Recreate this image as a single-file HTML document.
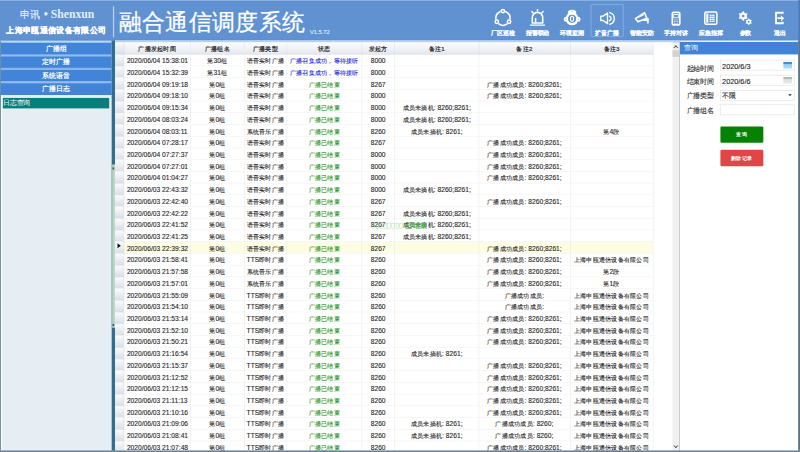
<!DOCTYPE html>
<html><head><meta charset="utf-8">
<style>
html,body{margin:0;padding:0;width:800px;height:452px;overflow:hidden;background:#fff}
#root{position:absolute;left:0;top:0;width:1920px;height:1080px;transform:scale(0.4166667,0.4185185);transform-origin:0 0;font-family:"Liberation Sans",sans-serif;overflow:hidden;background:#fff}
.abs{position:absolute}
#hdr{left:0;top:0;width:1920px;height:97px;background:#6092d2;border-top:2px solid #8fb6e6;border-bottom:2px solid #5686c8;box-sizing:border-box}
#brand1{left:48px;top:18px;font-family:"Liberation Serif",serif;font-weight:bold;font-size:28px;color:#e4edf8;white-space:nowrap;letter-spacing:0px}
#brand2{left:15px;top:58px;font-weight:bold;font-size:20px;color:#fff;white-space:nowrap;line-height:28px;-webkit-text-stroke:0.6px #fff}
#vline{left:271px;top:15px;width:3px;height:74px;background:#b9d2f0}
#title{left:285px;top:15px;font-size:56px;color:#fff;white-space:nowrap;line-height:76px;font-weight:normal;-webkit-text-stroke:0.6px #fff}
#ver{left:744px;top:69.5px;font-size:13.6px;line-height:16px;color:#d8e6f6;white-space:nowrap;-webkit-text-stroke:0.4px #d8e6f6}
.tb{position:absolute;top:11px;width:78px;height:76px;box-sizing:border-box;text-align:center;color:#fff}
.tb svg{position:absolute;left:15px;top:10px;width:48px;height:48px}
.tb .lb{position:absolute;left:-10px;right:-10px;top:56.5px;font-size:14px;font-weight:bold;line-height:20px;white-space:nowrap;-webkit-text-stroke:0.15px #fff}
.tb.on{border:1.6px solid #b0cbee}
#side{left:0;top:97px;width:268px;height:983px;background:#e7eef3;border-left:2px solid #5f7f8f;box-sizing:border-box;box-shadow:inset 3px 0 0 #f6fbfe}
.sbtn{position:absolute;left:0;width:266px;height:26.5px;border-bottom:1.5px solid #4c7dc2;background:#4284d8;color:#fff;font-weight:bold;font-size:17px;line-height:28px;text-align:center;border-top:4.3px solid #90bff2}
#teal{left:7px;top:233.7px;width:255px;height:25.5px;background:#047f7b;color:#fff;font-size:16px;line-height:25px;padding-left:1px;box-sizing:border-box}
#split{left:268px;top:97px;width:8px;height:983px;background:#2f6e8f}
#grid{left:276px;top:97px;width:1338px;height:983px;background:#fff;overflow:hidden;border-top:4px solid #b6d2ee;box-sizing:border-box}
table{border-collapse:collapse;table-layout:fixed;width:1354px;font-size:14.6px;color:#1e1e1e;-webkit-text-stroke:0.25px currentColor}
.a{font-size:16px}
td,th{padding:5px 0 0 0;height:28px;text-align:center;white-space:nowrap;overflow:hidden;border-right:1px solid #e3e3e3;border-bottom:1px solid #ececec;box-sizing:border-box}
th{height:28.7px;padding-top:2px;font-weight:normal;font-size:14.6px;-webkit-text-stroke:0.45px #222;background:linear-gradient(#fdfdfd,#e4e8ee);border-right:1px solid #d0d4da;border-bottom:1px solid #c8ccd2;color:#222}
td.rh,th.rh{background:linear-gradient(#fafbfc,#d9dfe7);border-right:1px solid #c7ccd4;border-bottom:1px solid #d6dbe2}
td.c1{text-align:left;padding-left:7px}
td.b{color:#2222e2}
td.g{color:#259525}
td.ce{border-right:none;border-bottom:none}
tr.sel td{background:#fdfde3}
tr.sel td.rh{background:linear-gradient(#fafbfc,#d9dfe7)}
tr.sel td.ce{background:#fff}
.ptr{display:inline-block;width:0;height:0;border-left:8px solid #111;border-top:6.5px solid transparent;border-bottom:6.5px solid transparent;vertical-align:middle;position:relative;top:-8px;left:0px}
#vscroll{left:1614px;top:97px;width:16px;height:983px;background:#f0f0f0;border-top:5px solid #b6d2ee;box-sizing:border-box}
#thumb{left:1614px;top:120px;width:16px;height:16px;background:#d2d2d2}
.sarr{position:absolute;left:1618px;width:8px;height:8px;box-sizing:border-box;border-left:2.5px solid #444;border-top:2.5px solid #444}
#panel{left:1630px;top:97px;width:290px;height:983px;background:#fff;border-left:2px solid #bfc4c8;border-right:4px solid #6c7f8a;box-sizing:border-box}
#phead{left:0;top:3.4px;width:100%;height:29.3px;background:#4283d8;color:#fff;font-size:17px;line-height:30px;padding-left:10px;box-sizing:border-box}
.lab{position:absolute;left:1648px;font-size:15.6px;line-height:20px;color:#333;white-space:nowrap;-webkit-text-stroke:0.3px #333}
.inp{position:absolute;left:1729px;width:178px;height:25px;border:1px solid #d2d2d2;box-sizing:border-box;background:#fff;font-size:17.5px;line-height:31px;padding-left:3px;color:#222;-webkit-text-stroke:0.25px #222}
.cal{position:absolute;left:150px;top:4px;width:21px;height:16px;background:linear-gradient(#3d8fd8 0,#3d8fd8 25%,#8cc8f0 25%,#b8e0f8 100%)}
.cal.g{background:linear-gradient(#b8b8b8 0,#b8b8b8 25%,#d8d8d8 25%,#ececec 100%)}
.dd{position:absolute;left:162px;top:8px;width:0;height:0;border-top:5.5px solid #222;border-left:4px solid transparent;border-right:4px solid transparent}
.btn{position:absolute;left:1729px;width:103px;height:39px;border-radius:3px;color:#fff;font-size:13px;font-weight:bold;text-align:center;line-height:39px}
#bottom{left:0;top:1076px;width:1920px;height:4px;background:linear-gradient(#8aa3b8,#54728b)}
#rb1{left:1916px;top:0;width:4px;height:97px;background:#4d7cb8}
#rb2{left:1916px;top:97px;width:4px;height:983px;background:#5d7686}
#splitl{left:268px;top:393px;width:8px;height:390px;background:linear-gradient(90deg,#9fbfae,#b8d4c4 60%,#c8dcd2)}
.mk{position:absolute;left:270px;width:4px;height:5px;background:#3d5a50}
</style></head><body><div id="root">
<div id="hdr" class="abs"></div>
<div id="brand1" class="abs"><span style="font-weight:normal;font-size:25px;-webkit-text-stroke:0.4px #e4edf8;margin-right:7px">申讯</span>• Shenxun</div>
<div id="brand2" class="abs">上海申瓯通信设备有限公司</div>
<div id="vline" class="abs"></div>
<div id="title" class="abs">融合通信调度系统</div>
<div id="ver" class="abs">V1.5.72</div>
<div class="tb" style="left:1168px"><svg viewBox="0 0 48 48" fill="none" stroke="#fff" stroke-width="3"><path d="M30.9 7.0 A17.0 17.0 0 0 1 40.9 24.3 M34.0 36.3 A17.0 17.0 0 0 1 14.0 36.3 M7.1 24.3 A17.0 17.0 0 0 1 17.1 7.0 " stroke-width="3.8" stroke-linecap="round"/><circle cx="24.0" cy="5.5" r="4" stroke-width="3.6"/><circle cx="38.7" cy="31.0" r="4" stroke-width="3.6"/><circle cx="9.3" cy="31.0" r="4" stroke-width="3.6"/></svg><div class="lb">厂区巡检</div></div>
<div class="tb" style="left:1251px"><svg viewBox="0 0 48 48" fill="none" stroke="#fff" stroke-width="3"><path d="M11.5 34 V21 A12.5 12.5 0 0 1 36.5 21 V34 Z" stroke-width="3.8" stroke-linejoin="round"/><path d="M6 39 H42" stroke-width="3.4"/><path d="M19.5 22 V33" stroke-width="3.4"/><path d="M24 1.5 V5.5 M10.5 6.5 L13 9.5 M37.5 6.5 L35 9.5" stroke-width="3.4" stroke-linecap="round"/></svg><div class="lb">报警联动</div></div>
<div class="tb" style="left:1334px"><svg viewBox="0 0 48 48" fill="none" stroke="#fff" stroke-width="3"><g fill="#fff" stroke="none"><circle cx="24" cy="24" r="15.5"/><ellipse cx="24" cy="8.5" rx="10" ry="6.5"/><circle cx="10" cy="25" r="6"/><circle cx="38" cy="25" r="6"/></g><g fill="#6092d2" stroke="none" opacity="0.55"><circle cx="24" cy="6" r="1.8"/><circle cx="8.5" cy="25" r="1.5"/><circle cx="39.5" cy="25" r="1.5"/></g><circle cx="24" cy="24" r="9.8" fill="#6092d2" stroke="none"/><ellipse cx="24" cy="24" rx="3.8" ry="6" stroke-width="2.6"/></svg><div class="lb">环境监测</div></div>
<div class="tb on" style="left:1418px"><svg viewBox="0 0 48 48" fill="none" stroke="#fff" stroke-width="3"><path d="M8 16.5 H13.5 L24 9 V34.5 L13.5 27 H8 Z" stroke-width="3.3" stroke-linejoin="round"/><path d="M29 16.5 A6 6 0 0 1 29 27.5" stroke-width="3.3" stroke-linecap="round"/><path d="M29.5 8 A14.5 14.5 0 0 1 29.5 36" stroke-width="3.3" stroke-linecap="round"/></svg><div class="lb">扩音广播</div></div>
<div class="tb" style="left:1501px"><svg viewBox="0 0 48 48" fill="none" stroke="#fff" stroke-width="3"><path d="M9 23.5 L31 9.5 L36.5 22.5 L15 31 Z" stroke-width="3.8" stroke-linejoin="round"/><path d="M16 21 L30 14" stroke-width="2"/><path d="M28 27 H39 M39 22 V35" stroke-width="3.8"/><circle cx="33" cy="27" r="2" fill="#fff" stroke="none"/></svg><div class="lb">智能安防</div></div>
<div class="tb" style="left:1583px"><svg viewBox="0 0 48 48" fill="none" stroke="#fff" stroke-width="3"><rect x="15.5" y="8.5" width="18" height="30" rx="3" stroke-width="3.8"/><rect x="19" y="13.5" width="11" height="8" stroke-width="2"/><g fill="#fff" stroke="none" opacity="0.75"><rect x="19.3" y="25.5" width="2.6" height="2.4"/><rect x="23.2" y="25.5" width="2.6" height="2.4"/><rect x="27.1" y="25.5" width="2.6" height="2.4"/><rect x="19.3" y="29.5" width="2.6" height="2.4"/><rect x="23.2" y="29.5" width="2.6" height="2.4"/><rect x="27.1" y="29.5" width="2.6" height="2.4"/><rect x="19.3" y="33.5" width="2.6" height="2.4"/><rect x="23.2" y="33.5" width="2.6" height="2.4"/><rect x="27.1" y="33.5" width="2.6" height="2.4"/></g></svg><div class="lb">手持对讲</div></div>
<div class="tb" style="left:1667px"><svg viewBox="0 0 48 48" fill="none" stroke="#fff" stroke-width="3"><rect x="9.5" y="7.5" width="29" height="29.5" rx="3.5" stroke-width="3.6"/><path d="M13 11 H18 V33.5 H13 Z" fill="#fff" stroke="none"/><g fill="#fff" stroke="none"><rect x="21.2" y="13.8" width="3.4" height="3.6"/><rect x="25.4" y="13.8" width="3.4" height="3.6"/><rect x="29.6" y="13.8" width="3.4" height="3.6"/><rect x="21.2" y="18.5" width="3.4" height="3.6"/><rect x="25.4" y="18.5" width="3.4" height="3.6"/><rect x="29.6" y="18.5" width="3.4" height="3.6"/><rect x="21.2" y="23.2" width="3.4" height="3.6"/><rect x="25.4" y="23.2" width="3.4" height="3.6"/><rect x="29.6" y="23.2" width="3.4" height="3.6"/><rect x="21.2" y="27.9" width="3.4" height="3.6"/><rect x="25.4" y="27.9" width="3.4" height="3.6"/><rect x="29.6" y="27.9" width="3.4" height="3.6"/></g></svg><div class="lb">应急指挥</div></div>
<div class="tb" style="left:1750px"><svg viewBox="0 0 48 48" fill="none" stroke="#fff" stroke-width="3"><path d="M14.8 9.3 L16.9 8.6 L17.0 5.8 L20.4 5.8 L20.5 8.6 L22.6 9.3 L23.6 9.9 L25.2 11.3 L27.7 10.1 L29.4 13.0 L27.1 14.5 L27.5 16.6 L27.5 17.8 L27.1 19.9 L29.4 21.4 L27.7 24.3 L25.2 23.1 L23.6 24.5 L22.6 25.1 L20.5 25.8 L20.4 28.6 L17.0 28.6 L16.9 25.8 L14.8 25.1 L13.8 24.5 L12.2 23.1 L9.7 24.3 L8.0 21.4 L10.3 19.9 L9.9 17.8 L9.9 16.6 L10.3 14.5 L8.0 13.0 L9.7 10.1 L12.2 11.3 L13.8 9.9 Z" fill="#fff" stroke="none"/><circle cx="18.7" cy="17.2" r="3.2" fill="#6092d2" stroke="none"/><path d="M29.4 25.6 L30.8 25.1 L30.8 23.1 L33.2 23.1 L33.2 25.1 L34.6 25.6 L35.4 26.0 L36.5 27.0 L38.3 26.0 L39.4 28.1 L37.7 29.1 L38.0 30.6 L38.0 31.4 L37.7 32.9 L39.4 33.9 L38.3 36.0 L36.5 35.0 L35.4 36.0 L34.6 36.4 L33.2 36.9 L33.2 38.9 L30.8 38.9 L30.8 36.9 L29.4 36.4 L28.6 36.0 L27.5 35.0 L25.7 36.0 L24.6 33.9 L26.3 32.9 L26.0 31.4 L26.0 30.6 L26.3 29.1 L24.6 28.1 L25.7 26.0 L27.5 27.0 L28.6 26.0 Z" fill="#fff" stroke="none"/><circle cx="32" cy="31" r="2.2" fill="#6092d2" stroke="none"/></svg><div class="lb">参数</div></div>
<div class="tb" style="left:1832px"><svg viewBox="0 0 48 48" fill="none" stroke="#fff" stroke-width="3"><path d="M31.5 12 V9.5 H15.5 V34.5 H31.5 V31" stroke-width="4.5" stroke-linejoin="miter"/><path d="M19 22.5 H29" stroke-width="4"/><path d="M27.5 15.5 L35 22.5 L27.5 29.5 Z" fill="#fff" stroke="none"/></svg><div class="lb">退出</div></div>
<div id="side" class="abs">
<div class="abs" style="left:0;top:0;width:266px;height:1.4px;background:#5a8acb"></div><div class="sbtn" style="top:1.4px;border-top-color:#b2dcf8">广播组</div>
<div class="sbtn" style="top:33.67px">定时广播</div>
<div class="sbtn" style="top:65.94px">系统语音</div>
<div class="sbtn" style="top:98.2px">广播日志</div>
</div>
<div id="teal" class="abs">日志查询</div>
<div id="split" class="abs"></div>
<div id="grid" class="abs">
<table>
<colgroup><col style="width:21px"><col style="width:160px"><col style="width:129px"><col style="width:102px"><col style="width:180px"><col style="width:79px"><col style="width:202px"><col style="width:219px"><col style="width:199px"><col style="width:63px"></colgroup>
<tr><th class="rh"></th><th>广播发起时间</th><th>广播组名</th><th>广播类型</th><th>状态</th><th>发起方</th><th>备注1</th><th>备注2</th><th>备注3</th><th style="border-right:none;background:#fff;border-bottom:none"></th></tr>
<tr><td class="rh"></td><td class="c1 a">2020/06/04 15:38:01</td><td>第<span class="a">30</span>组</td><td>语音实时广播</td><td class="b">广播召集成功，等待接听</td><td class="a">8000</td><td></td><td></td><td></td><td class="ce"></td></tr>
<tr><td class="rh"></td><td class="c1 a">2020/06/04 15:32:39</td><td>第<span class="a">31</span>组</td><td>语音实时广播</td><td class="b">广播召集成功，等待接听</td><td class="a">8000</td><td></td><td></td><td></td><td class="ce"></td></tr>
<tr><td class="rh"></td><td class="c1 a">2020/06/04 09:19:18</td><td>第<span class="a">0</span>组</td><td>语音实时广播</td><td class="g">广播已结束</td><td class="a">8267</td><td></td><td>广播成功成员<span class="a">: 8260;8261;</span></td><td></td><td class="ce"></td></tr>
<tr><td class="rh"></td><td class="c1 a">2020/06/04 09:18:10</td><td>第<span class="a">0</span>组</td><td>语音实时广播</td><td class="g">广播已结束</td><td class="a">8000</td><td></td><td>广播成功成员<span class="a">: 8260;8261;</span></td><td></td><td class="ce"></td></tr>
<tr><td class="rh"></td><td class="c1 a">2020/06/04 09:15:34</td><td>第<span class="a">0</span>组</td><td>语音实时广播</td><td class="g">广播已结束</td><td class="a">8000</td><td>成员未摘机<span class="a">: 8260;8261;</span></td><td></td><td></td><td class="ce"></td></tr>
<tr><td class="rh"></td><td class="c1 a">2020/06/04 08:03:24</td><td>第<span class="a">0</span>组</td><td>语音实时广播</td><td class="g">广播已结束</td><td class="a">8000</td><td>成员未摘机<span class="a">: 8260;8261;</span></td><td></td><td></td><td class="ce"></td></tr>
<tr><td class="rh"></td><td class="c1 a">2020/06/04 08:03:11</td><td>第<span class="a">0</span>组</td><td>系统音乐广播</td><td class="g">广播已结束</td><td class="a">8260</td><td>成员未摘机<span class="a">: 8261;</span></td><td></td><td>第<span class="a">4</span>段</td><td class="ce"></td></tr>
<tr><td class="rh"></td><td class="c1 a">2020/06/04 07:28:17</td><td>第<span class="a">0</span>组</td><td>语音实时广播</td><td class="g">广播已结束</td><td class="a">8267</td><td></td><td>广播成功成员<span class="a">: 8260;8261;</span></td><td></td><td class="ce"></td></tr>
<tr><td class="rh"></td><td class="c1 a">2020/06/04 07:27:37</td><td>第<span class="a">0</span>组</td><td>语音实时广播</td><td class="g">广播已结束</td><td class="a">8000</td><td></td><td>广播成功成员<span class="a">: 8260;8261;</span></td><td></td><td class="ce"></td></tr>
<tr><td class="rh"></td><td class="c1 a">2020/06/04 07:27:01</td><td>第<span class="a">0</span>组</td><td>语音实时广播</td><td class="g">广播已结束</td><td class="a">8000</td><td></td><td>广播成功成员<span class="a">: 8260;8261;</span></td><td></td><td class="ce"></td></tr>
<tr><td class="rh"></td><td class="c1 a">2020/06/04 01:04:27</td><td>第<span class="a">0</span>组</td><td>语音实时广播</td><td class="g">广播已结束</td><td class="a">8000</td><td></td><td>广播成功成员<span class="a">: 8260;8261;</span></td><td></td><td class="ce"></td></tr>
<tr><td class="rh"></td><td class="c1 a">2020/06/03 22:43:32</td><td>第<span class="a">0</span>组</td><td>语音实时广播</td><td class="g">广播已结束</td><td class="a">8000</td><td>成员未摘机<span class="a">: 8260;8261;</span></td><td></td><td></td><td class="ce"></td></tr>
<tr><td class="rh"></td><td class="c1 a">2020/06/03 22:42:40</td><td>第<span class="a">0</span>组</td><td>语音实时广播</td><td class="g">广播已结束</td><td class="a">8267</td><td></td><td>广播成功成员<span class="a">: 8260;8261;</span></td><td></td><td class="ce"></td></tr>
<tr><td class="rh"></td><td class="c1 a">2020/06/03 22:42:22</td><td>第<span class="a">0</span>组</td><td>语音实时广播</td><td class="g">广播已结束</td><td class="a">8267</td><td>成员未摘机<span class="a">: 8260;8261;</span></td><td></td><td></td><td class="ce"></td></tr>
<tr><td class="rh"></td><td class="c1 a">2020/06/03 22:41:52</td><td>第<span class="a">0</span>组</td><td>语音实时广播</td><td class="g">广播已结束</td><td class="a">8267</td><td>成员未摘机<span class="a">: 8260;8261;</span></td><td></td><td></td><td class="ce"></td></tr>
<tr><td class="rh"></td><td class="c1 a">2020/06/03 22:41:25</td><td>第<span class="a">0</span>组</td><td>语音实时广播</td><td class="g">广播已结束</td><td class="a">8267</td><td>成员未摘机<span class="a">: 8260;8261;</span></td><td></td><td></td><td class="ce"></td></tr>
<tr class="sel"><td class="rh"><span class="ptr"></span></td><td class="c1 a">2020/06/03 22:39:32</td><td>第<span class="a">0</span>组</td><td>语音实时广播</td><td class="g">广播已结束</td><td class="a">8267</td><td></td><td>广播成功成员<span class="a">: 8260;8261;</span></td><td></td><td class="ce"></td></tr>
<tr><td class="rh"></td><td class="c1 a">2020/06/03 21:58:41</td><td>第<span class="a">0</span>组</td><td><span class="a">TTS</span>即时广播</td><td class="g">广播已结束</td><td class="a">8260</td><td></td><td>广播成功成员<span class="a">: 8260;8261;</span></td><td>上海申瓯通信设备有限公司</td><td class="ce"></td></tr>
<tr><td class="rh"></td><td class="c1 a">2020/06/03 21:57:58</td><td>第<span class="a">0</span>组</td><td>系统音乐广播</td><td class="g">广播已结束</td><td class="a">8260</td><td></td><td>广播成功成员<span class="a">: 8260;8261;</span></td><td>第<span class="a">2</span>段</td><td class="ce"></td></tr>
<tr><td class="rh"></td><td class="c1 a">2020/06/03 21:57:01</td><td>第<span class="a">0</span>组</td><td>系统音乐广播</td><td class="g">广播已结束</td><td class="a">8260</td><td></td><td>广播成功成员<span class="a">: 8260;8261;</span></td><td>第<span class="a">1</span>段</td><td class="ce"></td></tr>
<tr><td class="rh"></td><td class="c1 a">2020/06/03 21:55:09</td><td>第<span class="a">0</span>组</td><td><span class="a">TTS</span>即时广播</td><td class="g">广播已结束</td><td class="a">8260</td><td></td><td>广播成功成员<span class="a">:</span></td><td>上海申瓯通信设备有限公司</td><td class="ce"></td></tr>
<tr><td class="rh"></td><td class="c1 a">2020/06/03 21:54:10</td><td>第<span class="a">0</span>组</td><td><span class="a">TTS</span>即时广播</td><td class="g">广播已结束</td><td class="a">8260</td><td></td><td>广播成功成员<span class="a">:</span></td><td>上海申瓯通信设备有限公司</td><td class="ce"></td></tr>
<tr><td class="rh"></td><td class="c1 a">2020/06/03 21:53:14</td><td>第<span class="a">0</span>组</td><td><span class="a">TTS</span>即时广播</td><td class="g">广播已结束</td><td class="a">8260</td><td></td><td>广播成功成员<span class="a">: 8260;8261;</span></td><td>上海申瓯通信设备有限公司</td><td class="ce"></td></tr>
<tr><td class="rh"></td><td class="c1 a">2020/06/03 21:52:10</td><td>第<span class="a">0</span>组</td><td><span class="a">TTS</span>即时广播</td><td class="g">广播已结束</td><td class="a">8260</td><td></td><td>广播成功成员<span class="a">: 8260;8261;</span></td><td>上海申瓯通信设备有限公司</td><td class="ce"></td></tr>
<tr><td class="rh"></td><td class="c1 a">2020/06/03 21:50:21</td><td>第<span class="a">0</span>组</td><td><span class="a">TTS</span>即时广播</td><td class="g">广播已结束</td><td class="a">8260</td><td></td><td>广播成功成员<span class="a">: 8260;8261;</span></td><td>上海申瓯通信设备有限公司</td><td class="ce"></td></tr>
<tr><td class="rh"></td><td class="c1 a">2020/06/03 21:16:54</td><td>第<span class="a">0</span>组</td><td><span class="a">TTS</span>即时广播</td><td class="g">广播已结束</td><td class="a">8260</td><td>成员未摘机<span class="a">: 8261;</span></td><td></td><td>上海申瓯通信设备有限公司</td><td class="ce"></td></tr>
<tr><td class="rh"></td><td class="c1 a">2020/06/03 21:15:37</td><td>第<span class="a">0</span>组</td><td><span class="a">TTS</span>即时广播</td><td class="g">广播已结束</td><td class="a">8260</td><td></td><td>广播成功成员<span class="a">: 8260;8261;</span></td><td>上海申瓯通信设备有限公司</td><td class="ce"></td></tr>
<tr><td class="rh"></td><td class="c1 a">2020/06/03 21:12:52</td><td>第<span class="a">0</span>组</td><td><span class="a">TTS</span>即时广播</td><td class="g">广播已结束</td><td class="a">8260</td><td></td><td>广播成功成员<span class="a">: 8260;8261;</span></td><td>上海申瓯通信设备有限公司</td><td class="ce"></td></tr>
<tr><td class="rh"></td><td class="c1 a">2020/06/03 21:12:15</td><td>第<span class="a">0</span>组</td><td><span class="a">TTS</span>即时广播</td><td class="g">广播已结束</td><td class="a">8260</td><td></td><td>广播成功成员<span class="a">: 8260;8261;</span></td><td>上海申瓯通信设备有限公司</td><td class="ce"></td></tr>
<tr><td class="rh"></td><td class="c1 a">2020/06/03 21:11:13</td><td>第<span class="a">0</span>组</td><td><span class="a">TTS</span>即时广播</td><td class="g">广播已结束</td><td class="a">8260</td><td></td><td>广播成功成员<span class="a">: 8260;8261;</span></td><td>上海申瓯通信设备有限公司</td><td class="ce"></td></tr>
<tr><td class="rh"></td><td class="c1 a">2020/06/03 21:10:16</td><td>第<span class="a">0</span>组</td><td><span class="a">TTS</span>即时广播</td><td class="g">广播已结束</td><td class="a">8260</td><td></td><td>广播成功成员<span class="a">: 8260;8261;</span></td><td>上海申瓯通信设备有限公司</td><td class="ce"></td></tr>
<tr><td class="rh"></td><td class="c1 a">2020/06/03 21:09:06</td><td>第<span class="a">0</span>组</td><td><span class="a">TTS</span>即时广播</td><td class="g">广播已结束</td><td class="a">8260</td><td>成员未摘机<span class="a">: 8261;</span></td><td>广播成功成员<span class="a">: 8260;</span></td><td>上海申瓯通信设备有限公司</td><td class="ce"></td></tr>
<tr><td class="rh"></td><td class="c1 a">2020/06/03 21:08:41</td><td>第<span class="a">0</span>组</td><td><span class="a">TTS</span>即时广播</td><td class="g">广播已结束</td><td class="a">8260</td><td>成员未摘机<span class="a">: 8261;</span></td><td>广播成功成员<span class="a">: 8260;</span></td><td>上海申瓯通信设备有限公司</td><td class="ce"></td></tr>
<tr><td class="rh"></td><td class="c1 a">2020/06/03 21:07:48</td><td>第<span class="a">0</span>组</td><td><span class="a">TTS</span>即时广播</td><td class="g">广播已结束</td><td class="a">8260</td><td></td><td>广播成功成员<span class="a">: 8260;8261;</span></td><td>上海申瓯通信设备有限公司</td><td class="ce"></td></tr>
</table>
</div>
<div class="abs" style="left:892px;top:533px;width:78px;height:14px"><i style="position:absolute;left:0.0px;top:0;width:7px;height:13px;border:1.5px solid #9fd89f;box-sizing:border-box"></i><i style="position:absolute;left:9.6px;top:0;width:7px;height:13px;border:1.5px solid #9fd89f;box-sizing:border-box"></i><i style="position:absolute;left:19.2px;top:0;width:7px;height:13px;border:1.5px solid #9fd89f;box-sizing:border-box"></i><i style="position:absolute;left:28.8px;top:0;width:7px;height:13px;border:1.5px solid #9fd89f;box-sizing:border-box"></i><i style="position:absolute;left:38.4px;top:0;width:7px;height:13px;border:1.5px solid #9fd89f;box-sizing:border-box"></i><i style="position:absolute;left:48.0px;top:0;width:7px;height:13px;border:1.5px solid #9fd89f;box-sizing:border-box"></i><i style="position:absolute;left:57.6px;top:0;width:7px;height:13px;border:1.5px solid #9fd89f;box-sizing:border-box"></i><i style="position:absolute;left:67.2px;top:0;width:7px;height:13px;border:1.5px solid #9fd89f;box-sizing:border-box"></i></div><div class="abs" style="left:973px;top:527px;font-size:17px;font-weight:bold;color:#4cc04c;white-space:nowrap;line-height:24px">已结束</div><div id="vscroll" class="abs"></div><div id="thumb" class="abs"></div><div class="sarr" style="top:110px;transform:rotate(45deg)"></div><div class="sarr" style="top:1061px;transform:rotate(225deg)"></div>
<div id="panel" class="abs"><div id="phead" class="abs">查询</div></div>
<div class="lab" style="top:155px">起始时间</div>
<div class="lab" style="top:186px">结束时间</div>
<div class="lab" style="top:220.3px">广播类型</div>
<div class="lab" style="top:256.4px">广播组名</div>
<div class="inp" style="top:143.4px">2020/6/3<div class="cal"></div></div>
<div class="inp" style="top:179.4px">2020/6/6<div class="cal g"></div></div>
<div class="inp" style="top:215.8px"><span style="position:relative;top:-4px;font-size:15.5px">不限</span><div class="dd"></div></div>
<div class="inp" style="top:249.9px"></div>
<div class="btn" style="top:302px;background:#058205">查询</div>
<div class="btn" style="top:358.4px;background:#e24545">删除记录</div>
<div id="splitl" class="abs"></div><div class="mk" style="top:400px"></div><div class="mk" style="top:774px"></div><div id="rb1" class="abs"></div><div id="rb2" class="abs"></div><div id="bottom" class="abs"></div>
</div></body></html>
